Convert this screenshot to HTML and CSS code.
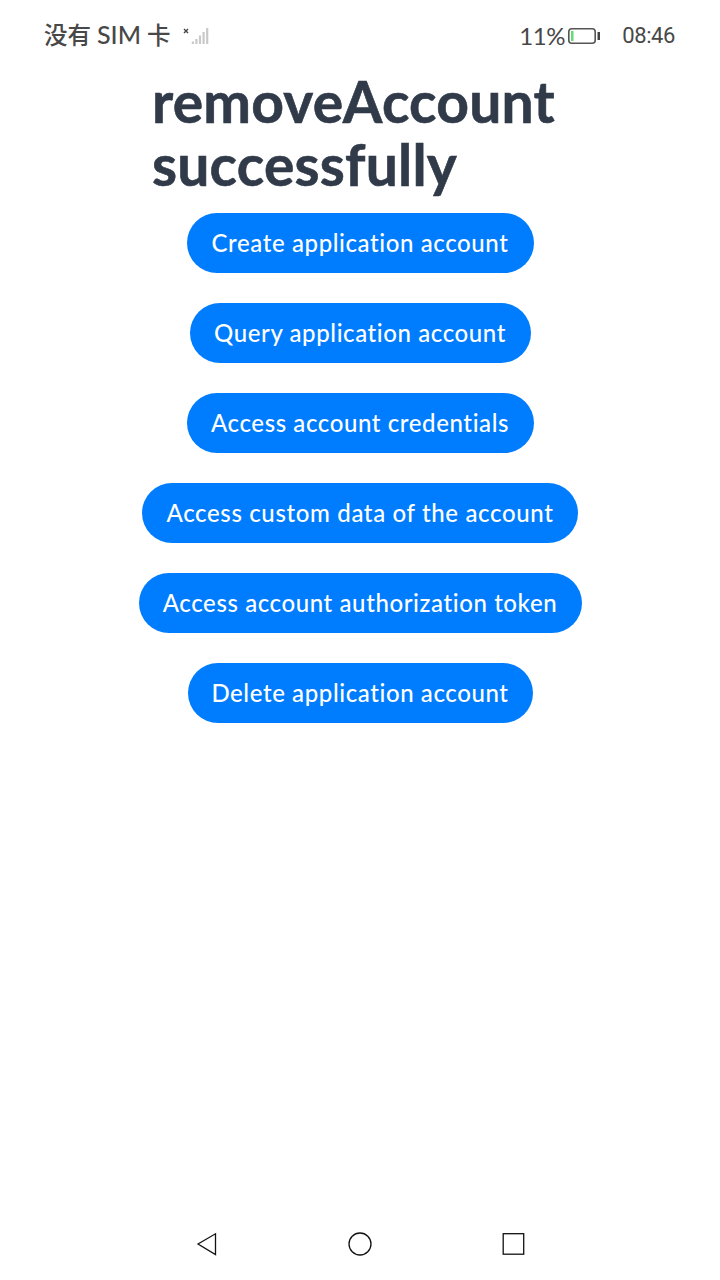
FILE: index.html
```html
<!DOCTYPE html>
<html lang="en">
<head>
<meta charset="utf-8">
<title>Application accounts</title>
<link rel="stylesheet" href="styles.css">
</head>
<body>
<div class="screen">
  <header class="status">
    <span class="carrier">没有 <span class="sim">SIM</span> 卡</span>
    <svg class="signal" width="28" height="22" viewBox="0 0 28 22">
      <path class="cross" d="M2 4l4 4M6 4l-4 4"/>
      <path class="bars" d="M10.9 19v-2.5M14.4 19v-5M18 19v-8.500M21.600 19v-12M25.200 19v-16"/>
    </svg>
    <span class="percent">11%</span>
    <svg class="battery" width="34" height="18" viewBox="0 0 34 18">
      <rect class="shell" x="1.800" y="1.800" width="26.400" height="14.400" rx="3"/>
      <rect class="charge" x="4" y="4" width="2.500" height="10"/>
      <rect class="tip" x="30.500" y="5" width="2.500" height="8"/>
    </svg>
    <time class="clock">08:46</time>
  </header>
  <main class="content">
    <h1 class="title">removeAccount<br>successfully</h1>
    <div class="actions">
      <button class="action create">Create application account</button>
      <button class="action query">Query application account</button>
      <button class="action credentials">Access account credentials</button>
      <button class="action custom">Access custom data of the account</button>
      <button class="action token">Access account authorization token</button>
      <button class="action delete">Delete application account</button>
    </div>
  </main>
  <nav class="navbar">
    <svg width="26" height="26" viewBox="0 0 26 26"><path d="M4 13L21.500 2.800v20.700z"/></svg>
    <svg width="26" height="26" viewBox="0 0 26 26"><circle cx="13" cy="13" r="11"/></svg>
    <svg width="26" height="26" viewBox="0 0 26 26"><rect x="3.200" y="2.700" width="20.500" height="20.500"/></svg>
  </nav>
</div>
</body>
</html>
```
FILE: styles.css
```css
body {
  margin: 0;
  background: #fff;
  font-family: Lato, "Noto Sans CJK SC", sans-serif;
}
.screen {
  display: flex;
  flex-direction: column;
  width: 720px;
  height: 1280px;
  background: #fff;
}
.status {
  display: flex;
  align-items: center;
  box-sizing: border-box;
  height: 72px;
  padding: 0 45px 0 44px;
  color: #484848;
  white-space: nowrap;
}
.carrier {
  width: 138px;
  padding-bottom: 3px;
  font: 500 23.5px/32px Lato, "Noto Sans CJK SC", sans-serif;
}
.sim { font-size: 25px; }
.signal { fill: none; }
.cross { stroke: #444; stroke-width: 1.4; }
.bars { stroke: #c9c9c9; stroke-width: 2.2; }
.percent {
  margin-left: auto;
  padding-bottom: 1px;
  font-size: 24px;
  line-height: 32px;
  letter-spacing: -0.4px;
}
.battery { margin: 0 21px 0 2px; }
.shell { fill: none; stroke: #555; stroke-width: 1.6; }
.charge { fill: #64dc72; }
.tip { fill: #444; }
.clock {
  font: 22px/32px Roboto, sans-serif;
  letter-spacing: -0.4px;
}
.content {
  display: flex;
  flex: 1;
  flex-direction: column;
  align-items: center;
}
.title {
  width: 416px;
  height: 128px;
  margin: -2px 0 15px;
  color: #303a49;
  font-size: 57px;
  font-weight: 700;
  line-height: 63px;
  letter-spacing: 0.2px;
  -webkit-text-stroke: 0.6px #303a49;
}
.actions {
  display: flex;
  flex-direction: column;
  align-items: center;
  gap: 30px;
}
.action {
  height: 60px;
  padding: 0 0 1px;
  border: 0;
  border-radius: 30px;
  background: #007dff;
  color: #fff;
  font: 500 24px/59px Lato, sans-serif;
  letter-spacing: 0.6px;
  white-space: nowrap;
}
.create, .credentials { width: 347px; }
.query { width: 341px; }
.custom { width: 436px; letter-spacing: 0.65px; }
.token { width: 443px; }
.delete { width: 345px; }
.navbar {
  display: flex;
  align-items: center;
  justify-content: space-between;
  height: 72px;
  padding: 0 194px;
}
.navbar svg {
  fill: none;
  stroke: #111;
  stroke-width: 1.3;
}
```
